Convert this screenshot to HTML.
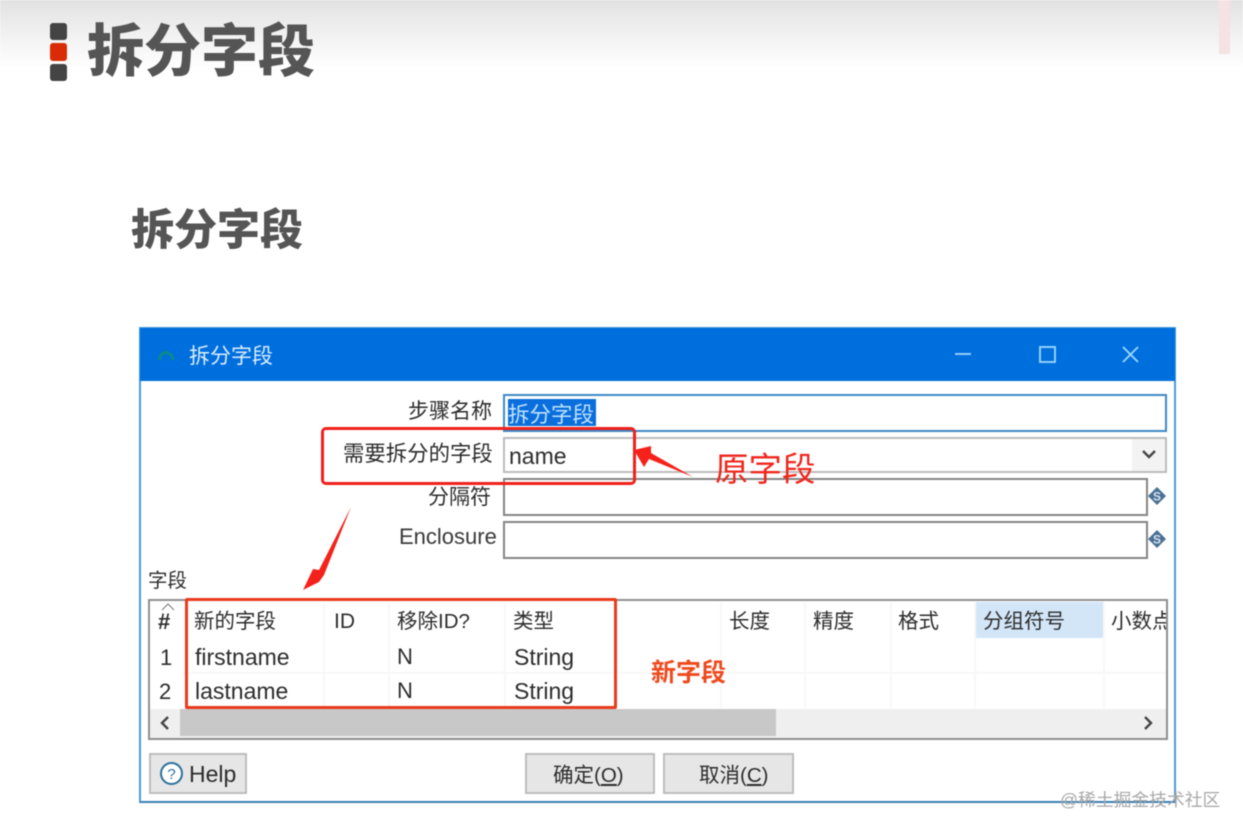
<!DOCTYPE html>
<html lang="zh"><head><meta charset="utf-8"><title>拆分字段</title>
<style>
html,body{margin:0;padding:0;background:#fff}
#p{position:relative;width:1243px;height:833px;overflow:hidden;background:#fff;font-family:"Liberation Sans","Noto Sans CJK SC",sans-serif;color:#2b2b2b;filter:blur(.45px)}
#p div{position:absolute}
.t{white-space:nowrap;line-height:1;position:absolute}
.c{font-size:21px;color:#2c2c2c}
.b{box-sizing:border-box}
.l{width:2px;top:602px;height:106px;background:#f7f7f7}
</style></head><body><div id="p">
<div style="left:0;top:0;width:1243px;height:68px;background:linear-gradient(#e2e2e2,#f1f1f1 50%,#fff)"></div>
<div style="left:1219px;top:0;width:11px;height:54px;background:#f5e2e2"></div>
<div style="left:50px;top:23px;width:17px;height:17px;background:#444;border-radius:3px"></div>
<div style="left:50px;top:43px;width:17px;height:18px;background:#d92b05;border-radius:3px"></div>
<div style="left:50px;top:64px;width:17px;height:17px;background:#444;border-radius:3px"></div>
<span class="t" style="left:87px;top:24px;font-size:57px;font-weight:900;color:#555">拆分字段</span>
<span class="t" style="left:131px;top:210px;font-size:43px;font-weight:900;color:#555">拆分字段</span>

<div class="b" style="left:139px;top:327px;width:1037px;height:476px;border:2px solid #4a9bd8;border-bottom-color:#3a80b5;background:#fff"></div>
<div style="left:140px;top:328px;width:1035px;height:53px;background:#006fde"></div>
<svg style="position:absolute;left:155px;top:345px" width="24" height="20"><path d="M4 15C6 5 16 5 18 15" fill="none" stroke="#0b8a8c" stroke-width="3"/></svg>
<span class="t" style="left:189px;top:346px;font-size:21px;color:#dbeeff">拆分字段</span>
<svg style="position:absolute;left:950px;top:340px" width="200" height="30" fill="none" stroke="#9fd8fb" stroke-width="1.8"><path d="M5 14H21"/><rect x="90" y="7" width="15" height="15"/><path d="M173 7L188 22M188 7L173 22"/></svg>

<span class="t c" style="left:408px;top:401px">步骤名称</span>
<div class="b" style="left:503px;top:394px;width:664px;height:38px;border:2px solid #3f88c5"></div>
<div style="left:508px;top:399px;width:88px;height:27px;background:#0a6fdc"></div>
<span class="t" style="left:508px;top:405px;font-size:21.500px;color:#bfe1ff">拆分字段</span>

<span class="t c" style="left:343px;top:444px;font-size:21.400px">需要拆分的字段</span>
<div class="b" style="left:503px;top:437px;width:664px;height:36px;border:2px solid #bcbcbc"></div>
<div style="left:1132px;top:439px;width:33px;height:32px;background:#f3f3f3"></div>
<svg style="position:absolute;left:1140px;top:449px" width="20" height="14" fill="none" stroke="#444" stroke-width="2.4"><path d="M3 2L9 8L15 2"/></svg>
<span class="t" style="left:509px;top:445px;font-size:23px;color:#2c2c2c">name</span>

<span class="t c" style="left:428px;top:487px">分隔符</span>
<div class="b" style="left:503px;top:478px;width:645px;height:38px;border:2px solid #858585"></div>
<span class="t" style="left:399px;top:526px;font-size:22px;color:#3a3a3a">Enclosure</span>
<div class="b" style="left:503px;top:521px;width:645px;height:38px;border:2px solid #858585"></div>
<svg style="position:absolute;left:1147px;top:486px" width="20" height="62" font-family="Liberation Sans" font-weight="700"><path d="M10 1L19 10L10 19L1 10Z" fill="#4a7194"/><text x="10" y="14.500" font-size="12" text-anchor="middle" fill="#d5e3ee">S</text><path d="M10 44L19 53L10 62L1 53Z" fill="#4a7194"/><text x="10" y="57.500" font-size="12" text-anchor="middle" fill="#d5e3ee">S</text></svg>

<span class="t" style="left:148px;top:572px;font-size:19.500px;color:#2c2c2c">字段</span>
<div class="b" style="left:148px;top:599px;width:1020px;height:141px;border:2px solid #8e8e8e;background:#fff"></div>
<div style="left:974px;top:602px;width:129px;height:36px;background:#d3e6f8"></div>
<div style="left:183px;top:672px;width:983px;height:2px;background:#f7f7f7"></div>
<div class="l" style="left:323px"></div>
<div class="l" style="left:388px"></div>
<div class="l" style="left:504px"></div>
<div class="l" style="left:720px"></div>
<div class="l" style="left:804px"></div>
<div class="l" style="left:890px"></div>
<div class="l" style="left:974px"></div>
<div class="l" style="left:1103px"></div>
<div style="left:150px;top:709px;width:1016px;height:29px;background:#efefef"></div>
<div style="left:180px;top:709px;width:596px;height:27px;background:#c8c8c8"></div>
<svg style="position:absolute;left:156px;top:712px" width="20" height="22" fill="none" stroke="#444" stroke-width="2.4"><path d="M12 5L6 11L12 17"/></svg>
<svg style="position:absolute;left:1140px;top:712px" width="20" height="22" fill="none" stroke="#444" stroke-width="2.4"><path d="M5 5L11 11L5 17"/></svg>
<svg style="position:absolute;left:160px;top:602px" width="16" height="9" fill="none" stroke="#777" stroke-width="1"><path d="M2 8L8 2L14 8"/></svg>

<span class="t" style="left:158px;top:611px;font-size:22px;font-weight:700;color:#2c2c2c">#</span>
<span class="t c" style="left:160px;top:647px;font-size:22px">1</span>
<span class="t c" style="left:159px;top:681px;font-size:22px">2</span>
<span class="t c" style="left:194px;top:612px;font-size:20.500px">新的字段</span>
<span class="t c" style="left:334px;top:611px">ID</span>
<span class="t c" style="left:397px;top:612px;font-size:20.500px">移除ID?</span>
<span class="t c" style="left:513px;top:612px;font-size:20.500px">类型</span>
<span class="t c" style="left:195px;top:646px;font-size:23px">firstname</span>
<span class="t c" style="left:195px;top:680px;font-size:23px">lastname</span>
<span class="t c" style="left:397px;top:646px;font-size:22px">N</span>
<span class="t c" style="left:397px;top:680px;font-size:22px">N</span>
<span class="t c" style="left:514px;top:646px;font-size:23px">String</span>
<span class="t c" style="left:514px;top:680px;font-size:23px">String</span>
<span class="t c" style="left:729px;top:612px;font-size:20.500px">长度</span>
<span class="t c" style="left:813px;top:612px;font-size:20.500px">精度</span>
<span class="t c" style="left:898px;top:612px;font-size:20.500px">格式</span>
<span class="t c" style="left:983px;top:612px;font-size:20.500px">分组符号</span>
<div style="left:1111px;top:606px;width:55px;height:30px;overflow:hidden"><span class="t c" style="left:0;top:6px;font-size:20.500px">小数点</span></div>

<div class="b" style="left:149px;top:753px;width:98px;height:41px;background:#e6e6e6;border:2px solid #bdbdbd"></div>
<svg style="position:absolute;left:159px;top:761px" width="26" height="26"><circle cx="12.500" cy="12.500" r="10.500" fill="#fff" stroke="#2d6f9f" stroke-width="2"/><text x="12.500" y="18" font-size="15" text-anchor="middle" fill="#2d6f9f" font-family="Liberation Sans">?</text></svg>
<span class="t" style="left:189px;top:763px;font-size:23px;color:#2c2c2c">Help</span>
<div class="b" style="left:525px;top:753px;width:130px;height:41px;background:#e6e6e6;border:2px solid #bdbdbd"></div>
<span class="t" style="left:553px;top:766px;font-size:20.500px;color:#2c2c2c">确定(<u>O</u>)</span>
<div class="b" style="left:663px;top:753px;width:131px;height:41px;background:#e6e6e6;border:2px solid #bdbdbd"></div>
<span class="t" style="left:699px;top:766px;font-size:20.500px;color:#2c2c2c">取消(<u>C</u>)</span>

<div class="b" style="left:321px;top:427px;width:315px;height:58px;border:3.500px solid #f0201a;border-radius:5px"></div>
<div class="b" style="left:185px;top:598px;width:432px;height:111px;border:3.500px solid #ea3a1c;border-radius:2px"></div>
<svg style="position:absolute;left:0;top:0" width="1243" height="833"><path d="M693 477L651 453L651 446L634 450L644 467L649 459Z" fill="#f4221b"/><path d="M351 507L319 570L313 569L303 590L319 582L324 575Z" fill="#f4221b"/></svg>
<span class="t" style="left:715px;top:454px;font-size:33.500px;color:#f0261c">原字段</span>
<span class="t" style="left:651px;top:661px;font-size:25px;font-weight:700;color:#ee4a1e">新字段</span>
<span class="t" style="left:1060px;top:792px;font-size:17.800px;color:#a8a8a8">@稀土掘金技术社区</span>
</div></body></html>
